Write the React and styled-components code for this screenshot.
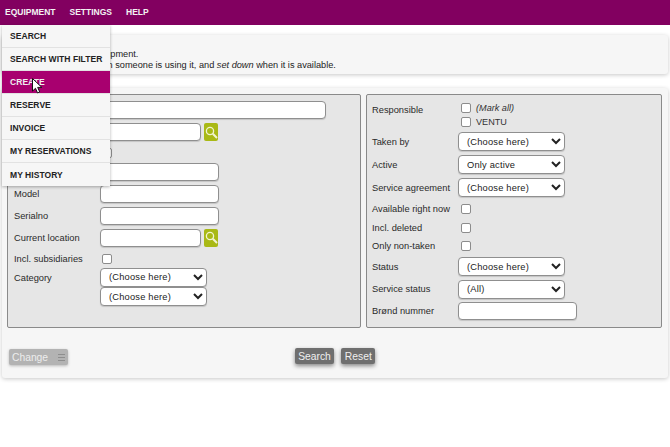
import React from 'react';
import styled, { createGlobalStyle } from 'styled-components';

const Global = createGlobalStyle`
  html, body { margin: 0; padding: 0; background: #fff; }
  body { font-family: "Liberation Sans", Arial, sans-serif; font-size: 12px; color: #222; overflow: hidden; }
  * { box-sizing: border-box; }
`;

const Page = styled.div`
  position: relative;
  width: 670px;
  height: 447px;
`;

const TopBar = styled.nav`
  display: flex;
  align-items: center;
  gap: 14px;
  height: 25px;
  padding: 0 5px 1px;
  background: #820060;
`;

const TopLink = styled.a`
  color: #f2f2f2;
  font-size: 8.5px;
  font-weight: 700;
  letter-spacing: 0;
  text-transform: uppercase;
`;

const Menu = styled.ul`
  position: absolute;
  top: 25px;
  left: 2px;
  width: 108px;
  margin: 0;
  padding: 0;
  list-style: none;
  background: #f6f6f6;
  box-shadow: 0 1px 3px rgba(0, 0, 0, 0.3);
  z-index: 10;
`;

const MenuItem = styled.li`
  display: flex;
  align-items: center;
  height: 23px;
  padding: 0 8px;
  border-bottom: 1px solid #e2e2e2;
  font-size: 8.5px;
  font-weight: 700;
  letter-spacing: 0.05px;
  white-space: nowrap;
  color: ${p => (p.$active ? '#f0f0f0' : '#222')};
  background: ${p => (p.$active ? '#a8006f' : 'transparent')};
  &:last-child { border-bottom: 0; }
`;

const Cursor = styled.svg`
  position: absolute;
  top: 78px;
  left: 32px;
  width: 11px;
  height: 16px;
  z-index: 11;
`;

const Content = styled.main`
  display: flex;
  flex-direction: column;
  gap: 14px;
  padding: 10px 2px 0;
`;

const Notice = styled.section`
  height: 39px;
  padding: 14px 8px 0;
  font-size: 9.2px;
  line-height: 11px;
  background: #f6f6f6;
  border-radius: 3px;
  box-shadow: 0 1px 4px rgba(0, 0, 0, 0.22);
`;

const Panel = styled.section`
  height: 290px;
  padding: 6px 5px 0;
  background: #f6f6f6;
  border-radius: 3px;
  box-shadow: 0 1px 4px rgba(0, 0, 0, 0.22);
`;

const Columns = styled.div`
  display: flex;
  gap: 5px;
  height: 234px;
`;

const FieldSet = styled.div`
  width: ${p => p.$width}px;
  padding: ${p => p.$pad};
  background: #e6e6e6;
  border: 1px solid #8a8a8a;
  border-radius: 2px;
`;

const Row = styled.div`
  display: grid;
  grid-template-columns: 86px 1fr;
  align-items: ${p => (p.$top ? 'start' : 'center')};
  height: ${p => p.$h}px;
`;

const Label = styled.span`
  margin-top: ${p => p.$mt || 0}px;
  font-size: 9.3px;
  color: #2a2a2a;
  white-space: nowrap;
`;

const Line = styled.div`
  display: flex;
  align-items: center;
  gap: 3px;
  height: ${p => p.$h || 18}px;
`;

const Stack = styled.div`
  display: flex;
  flex-direction: column;
`;

const TextInput = styled.input`
  display: block;
  width: ${p => p.$w}px;
  height: 18px;
  padding: 0 4px;
  background: #fff;
  border: 1px solid #8f8f8f;
  border-radius: 4px;
  box-shadow: 0 1px 1px rgba(0, 0, 0, 0.15);
`;

const SelectBox = styled.select`
  display: block;
  width: 107px;
  height: 19px;
  padding: 0 4px;
  font-family: inherit;
  font-size: 9.3px;
  letter-spacing: 0.2px;
  color: #222;
  background: #fff;
  border: 1px solid #8f8f8f;
  border-radius: 4px;
  box-shadow: 0 1px 1px rgba(0, 0, 0, 0.15);
`;

const Check = styled.span`
  display: inline-block;
  flex: none;
  width: 10px;
  height: 10px;
  margin-left: ${p => p.$left || 2}px;
  background: #fff;
  border: 1px solid #8c8c8c;
  border-radius: 2px;
`;

const LookupButton = styled.button`
  display: flex;
  align-items: center;
  justify-content: center;
  width: 14px;
  height: 18px;
  padding: 0;
  background: #a9b915;
  border: 0;
  border-radius: 2px;
`;

const CheckText = styled.span`
  margin-left: 2px;
  font-size: 9.15px;
  font-style: ${p => (p.$italic ? 'italic' : 'normal')};
  color: #333;
`;

const Footer = styled.div`
  position: relative;
  display: flex;
  justify-content: center;
  gap: 7px;
  margin-top: 20px;
`;

const ActionButton = styled.button`
  height: 16px;
  padding: 0 3.5px;
  font-family: inherit;
  font-size: 10.3px;
  line-height: 15px;
  color: #f0f0f0;
  background: #6f6f6f;
  border: 0;
  border-radius: 2px;
  box-shadow: 0 2px 4px rgba(0, 0, 0, 0.45);
`;

const ChangeButton = styled.button`
  position: absolute;
  left: 2px;
  top: 1px;
  display: flex;
  align-items: center;
  gap: 10px;
  height: 16px;
  padding: 0 3px;
  font-family: inherit;
  font-size: 10.3px;
  color: #ededed;
  background: #b3b3b3;
  border: 0;
  border-radius: 2px;
  box-shadow: 0 1px 3px rgba(0, 0, 0, 0.25);
`;

const Search = () => (
  <svg width="13" height="13" viewBox="0 0 13 13" fill="none" stroke="#f2f4d0" strokeWidth="1.3">
    <circle cx="5" cy="5" r="3.6" />
    <path d="M7.8 7.8 12 12" strokeWidth="2" />
  </svg>
);

const Bars = () => (
  <svg width="7" height="7" viewBox="0 0 7 7" stroke="#8e8e8e" strokeWidth="1">
    <path d="M0 .5h7M0 3.5h7M0 6.5h7" />
  </svg>
);

const menuItems = ['Search', 'Search with filter', 'Create', 'Reserve', 'Invoice', 'My reservations', 'My history'];

export default function App() {
  return (
    <Page>
      <Global />
      <TopBar>
        <TopLink>Equipment</TopLink>
        <TopLink>Settings</TopLink>
        <TopLink>Help</TopLink>
      </TopBar>

      <Menu>
        {menuItems.map(item => (
          <MenuItem key={item} $active={item === 'Create'}>{item.toUpperCase()}</MenuItem>
        ))}
      </Menu>
      <Cursor viewBox="0 0 11 16">
        <path d="M.5.5v12.6l3-2.8 2 4.6 2.2-1-2-4.5h4.1z" fill="#fff" stroke="#111" strokeWidth="1" />
      </Cursor>

      <Content>
        <Notice>
          <div>You can look up the equipment.</div>
          <div>Mark it with <i>pick up</i> when someone is using it, and <i>set down</i> when it is available.</div>
        </Notice>

        <Panel>
          <Columns>
            <FieldSet $width={354} $pad="4px 6px 0">
              <Row $h={22}><span /><TextInput $w={226} /></Row>
              <Row $h={22}>
                <span />
                <Line><TextInput $w={101} /><LookupButton><Search /></LookupButton></Line>
              </Row>
              <Row $h={19}><span /><Check /></Row>
              <Row $h={20}><span /><TextInput $w={119} /></Row>
              <Row $h={24}><Label>Model</Label><TextInput $w={119} /></Row>
              <Row $h={19}><Label>Serialno</Label><TextInput $w={119} /></Row>
              <Row $h={25}>
                <Label>Current location</Label>
                <Line><TextInput $w={101} /><LookupButton><Search /></LookupButton></Line>
              </Row>
              <Row $h={17}><Label>Incl. subsidiaries</Label><Check /></Row>
              <Row $h={20}>
                <Label $mt={2}>Category</Label>
                <SelectBox><option>(Choose here)</option></SelectBox>
              </Row>
              <Row $h={19}>
                <span />
                <SelectBox><option>(Choose here)</option></SelectBox>
              </Row>
            </FieldSet>

            <FieldSet $width={296} $pad="6px 5px 0">
              <Row $h={29} $top>
                <Label $mt={4}>Responsible</Label>
                <Stack>
                  <Line $h={14}><Check $left={3} /><CheckText $italic>(Mark all)</CheckText></Line>
                  <Line $h={14}><Check $left={3} /><CheckText>VENTU</CheckText></Line>
                </Stack>
              </Row>
              <Row $h={23}><Label>Taken by</Label><SelectBox><option>(Choose here)</option></SelectBox></Row>
              <Row $h={23}><Label>Active</Label><SelectBox><option>Only active</option></SelectBox></Row>
              <Row $h={23}><Label>Service agreement</Label><SelectBox><option>(Choose here)</option></SelectBox></Row>
              <Row $h={20}><Label>Available right now</Label><Check $left={3} /></Row>
              <Row $h={18}><Label>Incl. deleted</Label><Check $left={3} /></Row>
              <Row $h={18}><Label>Only non-taken</Label><Check $left={3} /></Row>
              <Row $h={23}><Label>Status</Label><SelectBox><option>(Choose here)</option></SelectBox></Row>
              <Row $h={22}><Label>Service status</Label><SelectBox><option>(All)</option></SelectBox></Row>
              <Row $h={22}><Label>Brønd nummer</Label><TextInput $w={119} /></Row>
            </FieldSet>
          </Columns>

          <Footer>
            <ChangeButton>Change <Bars /></ChangeButton>
            <ActionButton>Search</ActionButton>
            <ActionButton>Reset</ActionButton>
          </Footer>
        </Panel>
      </Content>
    </Page>
  );
}
